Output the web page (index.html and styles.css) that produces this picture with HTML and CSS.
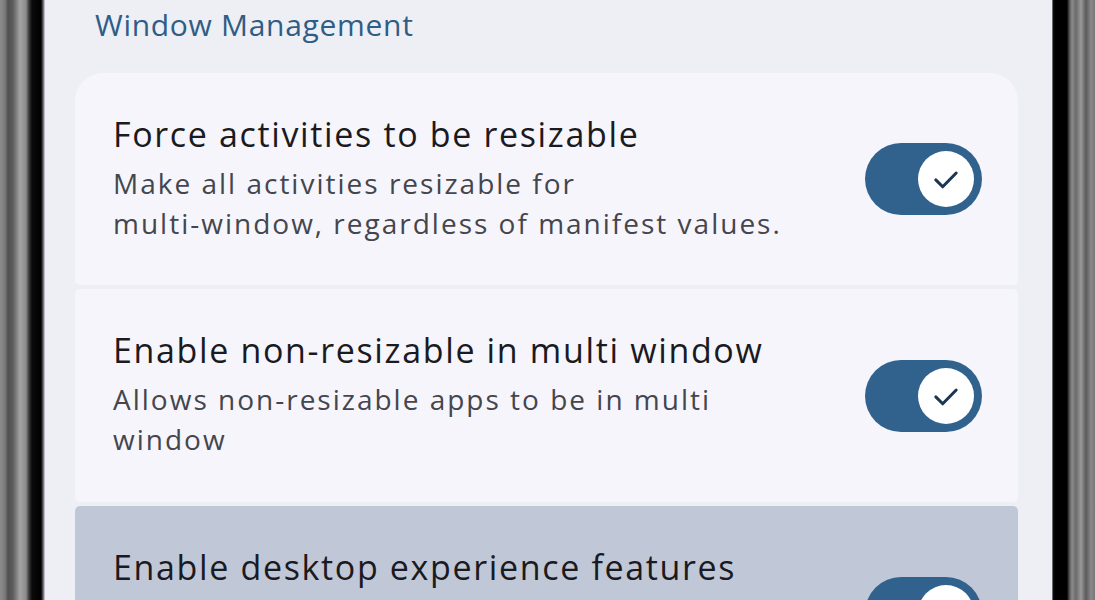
FILE: index.html
```html
<!DOCTYPE html>
<html lang="en">
<head>
<meta charset="utf-8">
<title>Window Management</title>
<link rel="stylesheet" href="styles.css">
</head>
<body>
<div class="device">
  <div class="bezel bezel-left"></div>
  <main class="screen">
    <h2 class="section-title">Window Management</h2>
    <div class="list">
      <div class="item item-first">
        <div class="text">
          <div class="title">Force activities to be resizable</div>
          <div class="summary">Make all activities resizable for<br>multi-window, regardless of manifest values.</div>
        </div>
        <div class="switch on"><span class="knob"><svg class="check" viewBox="0 0 24 24"><path d="M5.2 12.6l4.6 4.6 9-9.2" fill="none" stroke="#1b3553" stroke-width="2" stroke-linecap="round" stroke-linejoin="round"/></svg></span></div>
      </div>
      <div class="item">
        <div class="text">
          <div class="title">Enable non-resizable in multi window</div>
          <div class="summary">Allows non-resizable apps to be in multi<br>window</div>
        </div>
        <div class="switch on"><span class="knob"><svg class="check" viewBox="0 0 24 24"><path d="M5.2 12.6l4.6 4.6 9-9.2" fill="none" stroke="#1b3553" stroke-width="2" stroke-linecap="round" stroke-linejoin="round"/></svg></span></div>
      </div>
      <div class="item item-pressed">
        <div class="text">
          <div class="title">Enable desktop experience features</div>
        </div>
        <div class="switch on"><span class="knob"><svg class="check" viewBox="0 0 24 24"><path d="M5.2 12.6l4.6 4.6 9-9.2" fill="none" stroke="#1b3553" stroke-width="2" stroke-linecap="round" stroke-linejoin="round"/></svg></span></div>
      </div>
    </div>
  </main>
  <div class="bezel bezel-right"></div>
</div>
</body>
</html>
```

FILE: styles.css
```css
* { box-sizing: border-box; }
html, body {
  margin: 0;
  padding: 0;
  width: 1095px;
  height: 600px;
  overflow: hidden;
  background: #000;
}
.device {
  display: flex;
  width: 1095px;
  height: 600px;
}
.bezel-left {
  width: 45px;
  flex: none;
  background: linear-gradient(to right,
    #8c8c8c 0px, #7a7a7a 5px, #505050 8px, #5e5e5e 13px,
    #a4a4a4 20px, #8a8a8a 26px, #3a3a3a 29px, #0a0a0a 32px,
    #000 41px, #5a5a60 43px, #dcdce4 45px);
}
.bezel-right {
  width: 43px;
  flex: none;
  background: linear-gradient(to right,
    #c8c8d0 0px, #101010 1px, #000 3px, #000 15px,
    #4a4a4a 17px, #8c8c8c 20px, #6a6a6a 24px, #9a9a9a 29px,
    #5a5a5a 34px, #8a8a8a 39px, #777 43px);
}
.screen {
  flex: 1;
  background: #eeeef5;
  padding: 0 34px 0 30px;
  font-family: "Open Sans", Roboto, sans-serif;
  overflow: hidden;
}
.section-title {
  margin: 0;
  padding: 5px 0 0 20px;
  height: 73px;
  font-size: 30px;
  font-weight: 400;
  line-height: 40px;
  letter-spacing: 0.7px;
  color: #2e5d85;
}
.list {
  display: flex;
  flex-direction: column;
  gap: 4px;
}
.item {
  display: flex;
  align-items: center;
  background: #f6f5fc;
  border-radius: 5px;
  height: 213px;
  flex: none;
  padding: 0 36px 0 38px;
}
.item-first {
  border-radius: 28px 28px 5px 5px;
  height: 212px;
}
.item-pressed {
  background: #c0c8d8;
}
.text {
  flex: 1;
  align-self: flex-start;
  padding-top: 38px;
}
.title {
  font-size: 34px;
  line-height: 46px;
  letter-spacing: 1.65px;
  color: #1a1a20;
  margin-bottom: 6px;
}
.summary {
  font-size: 28px;
  line-height: 40px;
  letter-spacing: 2px;
  color: #44464d;
}
.switch {
  width: 117px;
  height: 72px;
  flex: none;
  border-radius: 36px;
  background: #31628e;
  display: flex;
  align-items: center;
  justify-content: flex-end;
  padding-right: 8px;
}
.knob {
  width: 56px;
  height: 56px;
  border-radius: 50%;
  background: #fff;
  display: flex;
  align-items: center;
  justify-content: center;
}
.check {
  width: 36px;
  height: 36px;
}
```
